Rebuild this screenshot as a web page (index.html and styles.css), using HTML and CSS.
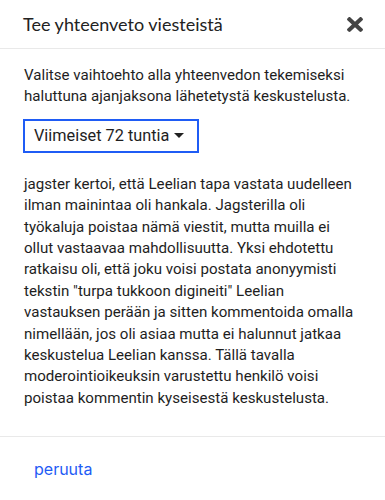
FILE: index.html
```html
<!DOCTYPE html>
<html lang="fi">
<head>
<meta charset="utf-8">
<link rel="stylesheet" href="styles.css">
</head>
<body>
<div class="modal">
  <div class="modal-header">
    <h1 class="title">Tee yhteenveto viesteistä</h1>
    <button class="close" aria-label="sulje">
      <svg viewBox="0 78 352 356" width="16" height="15" preserveAspectRatio="none"><path fill="currentColor" d="M242.72 256l100.07-100.07c12.28-12.28 12.28-32.19 0-44.48l-22.240-22.24c-12.28-12.28-32.19-12.28-44.48 0L176 189.28 75.93 89.21c-12.28-12.28-32.19-12.280-44.48 0L9.21 111.45c-12.28 12.28-12.28 32.19 0 44.48L109.28 256 9.21 356.07c-12.28 12.28-12.28 32.19 0 44.48l22.24 22.24c12.28 12.28 32.2 12.28 44.48 0L176 322.72l100.07 100.07c12.28 12.28 32.2 12.28 44.48 0l22.24-22.24c12.28-12.28 12.28-32.19 0-44.48L242.72 256z"/></svg>
    </button>
  </div>
  <div class="modal-body">
    <p class="intro">Valitse vaihtoehto alla yhteenvedon tekemiseksi<br>haluttuna ajanjaksona lähetetystä keskustelusta.</p>
    <div class="select">
      <span>Viimeiset 72 tuntia</span>
      <span class="caret"></span>
    </div>
    <p class="summary">jagster kertoi, että Leelian tapa vastata uudelleen<br>ilman mainintaa oli hankala. Jagsterilla oli<br>työkaluja poistaa nämä viestit, mutta muilla ei<br>ollut vastaavaa mahdollisuutta. Yksi ehdotettu<br>ratkaisu oli, että joku voisi postata anonyymisti<br>tekstin "turpa tukkoon digineiti" Leelian<br>vastauksen perään ja sitten kommentoida omalla<br>nimellään, jos oli asiaa mutta ei halunnut jatkaa<br>keskustelua Leelian kanssa. Tällä tavalla<br>moderointioikeuksin varustettu henkilö voisi<br>poistaa kommentin kyseisestä keskustelusta.</p>
  </div>
  <div class="modal-footer">
    <button class="cancel">peruuta</button>
  </div>
</div>
</body>
</html>
```
FILE: styles.css
```css
html, body {
  margin: 0;
  padding: 0;
  background: #fff;
}
.modal {
  width: 385px;
  font-family: Roboto, "Noto Sans", sans-serif;
  color: #1e1e1e;
}
.modal-header {
  height: 49px;
  box-sizing: border-box;
  display: flex;
  align-items: center;
  justify-content: space-between;
  padding: 0 22px 0 23px;
  border-bottom: 1px solid #e9e9e9;
}
.title {
  margin: 0;
  font-family: Lato, sans-serif;
  font-weight: 400;
  font-size: 18px;
  color: #222;
}
.close {
  border: 0;
  background: none;
  padding: 0;
  color: #444;
  display: flex;
}
.modal-body {
  padding: 16px 24px 27px 24px;
  border-bottom: 1px solid #e9e9e9;
}
.intro, .summary {
  margin: 0;
  font-size: 15.1px;
  line-height: 21.4px;
  white-space: nowrap;
}
.select {
  margin: 11px 0 21px -1px;
  width: 176px;
  height: 34px;
  box-sizing: border-box;
  border: 2px solid #1f5cf5;
  display: flex;
  align-items: center;
  justify-content: space-between;
  padding: 0 13px 0 9px;
  font-size: 16.3px;
}
.caret {
  width: 0;
  height: 0;
  border-left: 5px solid transparent;
  border-right: 5px solid transparent;
  border-top: 5px solid #222;
}
.modal-footer {
  padding: 22px 24px;
}
.cancel {
  border: 0;
  background: none;
  padding: 0 10px;
  font-family: Inter, Roboto, sans-serif;
  font-size: 16px;
  color: #1f5cf5;
}
```
